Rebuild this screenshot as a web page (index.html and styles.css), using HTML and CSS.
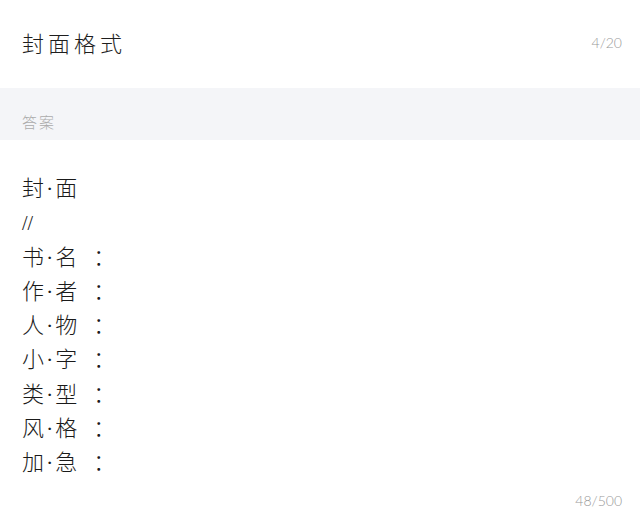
FILE: index.html
```html
<!DOCTYPE html>
<html lang="zh">
<head>
<meta charset="utf-8">
<link rel="stylesheet" href="styles.css">
</head>
<body>
<div class="page">
  <header class="head">
    <h1 class="title">封面格式</h1>
    <span class="count">4/20</span>
  </header>
  <div class="band">答案</div>
  <div class="body">
    <div class="line">封·面</div>
    <div class="line slash">//</div>
    <div class="line">书·名<span class="colon">：</span></div>
    <div class="line">作·者<span class="colon">：</span></div>
    <div class="line">人·物<span class="colon">：</span></div>
    <div class="line">小·字<span class="colon">：</span></div>
    <div class="line">类·型<span class="colon">：</span></div>
    <div class="line">风·格<span class="colon">：</span></div>
    <div class="line">加·急<span class="colon">：</span></div>
  </div>
  <div class="foot"><span class="count">48/500</span></div>
</div>
</body>
</html>
```
FILE: styles.css
```css
html, body {
  margin: 0;
  padding: 0;
  background: #fff;
}
body {
  font-family: "Liberation Serif", "Noto Sans CJK SC", serif;
  color: #222;
}
.page {
  width: 640px;
  height: 524px;
  display: flex;
  flex-direction: column;
}
.head {
  height: 88px;
  display: flex;
  align-items: center;
  justify-content: space-between;
  padding: 0 18px 4px 22px;
  box-sizing: border-box;
}
.title {
  margin: 0;
  font-family: "Noto Sans CJK SC", sans-serif;
  font-size: 22px;
  font-weight: 300;
  letter-spacing: 4px;
  color: #1e1e1e;
}
.count {
  font-family: "Lato", "Liberation Sans", sans-serif;
  font-weight: 300;
  font-size: 14px;
  color: #999999;
}
.band {
  height: 52px;
  box-sizing: border-box;
  background: #f4f5f8;
  display: flex;
  align-items: center;
  padding: 14px 22px 0;
  font-family: "Noto Sans CJK SC", sans-serif;
  font-weight: 300;
  font-size: 15px;
  letter-spacing: 2px;
  color: #ababab;
}
.body {
  padding: 32px 22px 0;
  flex: 1;
}
.line {
  font-size: 22px;
  line-height: 34.25px;
  height: 34.25px;
  letter-spacing: 2px;
  font-weight: 300;
  color: #1a1a1a;
}
.slash {
  font-size: 20px;
  letter-spacing: 0;
}
.colon {
  font-family: "Noto Sans CJK SC", sans-serif;
  line-height: 1;
  margin-left: 14px;
}
.foot {
  display: flex;
  justify-content: flex-end;
  padding: 0 18px 15px;
}
```
